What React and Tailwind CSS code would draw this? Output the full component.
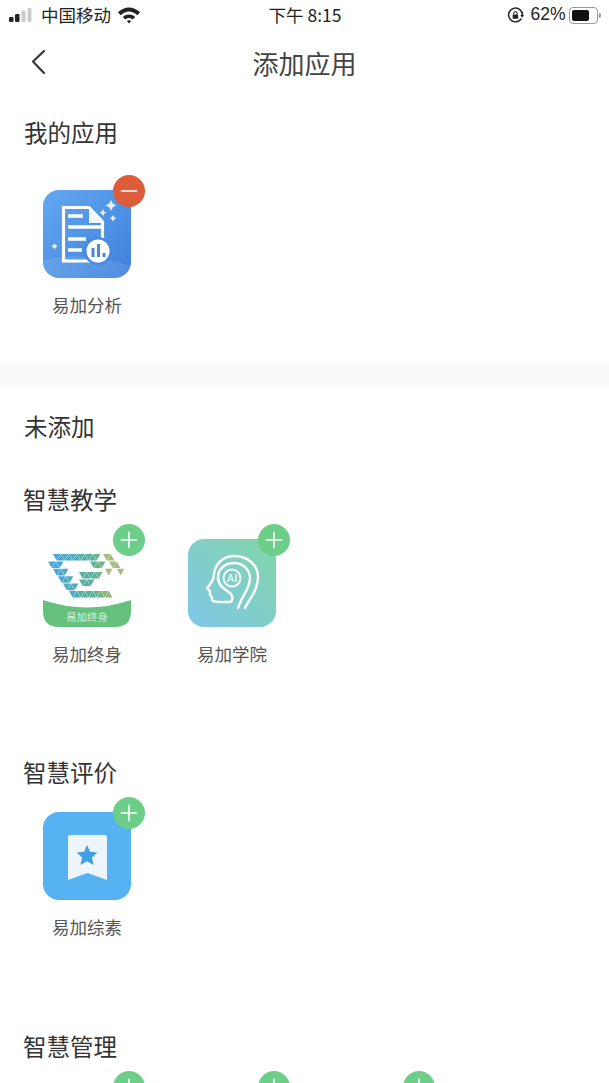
import React from "react";
import { Plus, Minus } from "lucide-react";

const CJK = "font-['Noto_Sans_CJK_SC','Noto_Sans',sans-serif]";

// triangle rows for the E logo: [startX, endX] in icon coords
const LOGO_ROWS = [
  { y: 15, spans: [[10, 58], [60, 72]] },
  { y: 22.4, spans: [[5, 23], [47, 63], [66, 80]] },
  { y: 29.8, spans: [[10, 28], [62, 70], [74, 84]] },
  { y: 33, spans: [[36, 60]] },
  { y: 37.2, spans: [[15, 31]] },
  { y: 40.4, spans: [[36, 52]] },
  { y: 44.6, spans: [[20, 36]] },
  { y: 52, spans: [[26, 72]] },
];

const logoColor = (x, y) => {
  if (x >= 60 && y < 32) return "#a7bb80";
  if (x > 56 && y > 45) return "#93b67c";
  if (x < 18) return "#4aa6d6";
  if (x < 34) return "#4fabc0";
  if (x < 50) return "#58b0a0";
  return "#6ab48a";
};

const ELogo = () => {
  const tris = [];
  LOGO_ROWS.forEach((row) => {
    row.spans.forEach(([a, b]) => {
      let i = 0;
      for (let x = a; x + 8 <= b + 0.1; x += 4) {
        const up = i % 2 === 1;
        const pts = up
          ? `${x},${row.y + 6.6} ${x + 3.7},${row.y} ${x + 7.4},${row.y + 6.6}`
          : `${x},${row.y} ${x + 7.4},${row.y} ${x + 3.7},${row.y + 6.6}`;
        tris.push(<polygon key={`${row.y}-${x}`} points={pts} fill={logoColor(x, row.y)} />);
        i++;
      }
    });
  });
  return <g>{tris}</g>;
};

const AnalysisIcon = () => (
  <div className="h-[88px] w-[88px] rounded-[16px] bg-gradient-to-br from-[#62a9f0] to-[#3f7fdc]">
    <svg viewBox="0 0 88 88" className="h-full w-full">
      <path d="M0 70 Q40 60 88 76 V72 Q88 88 72 88 H16 Q0 88 0 72Z" fill="#fff" opacity="0.1" />
      <path d="M20.5 17.5 H46 L59.5 32 V71 H20.5Z" fill="none" stroke="#fff" strokeWidth="3.2" />
      <path d="M46 17 V33 H60Z" fill="#fff" opacity="0.9" />
      <path d="M25 26 H40 M25 37 H58 M25 49 H43 M25 60 H39" stroke="#fff" strokeWidth="3.6" fill="none" />
      <circle cx="55" cy="61" r="14" fill="#4a87e0" />
      <circle cx="55" cy="61" r="11.5" fill="#fff" />
      <path d="M50 58 V67 M55.5 54 V67 M61 63 V67" stroke="#4a87e0" strokeWidth="3" />
      <path d="M68 10 l1.8 3.6 3.6 1.8 -3.6 1.8 -1.8 3.6 -1.8 -3.6 -3.6 -1.8 3.6 -1.8Z M60 19 l1.2 2.4 2.4 1.2 -2.4 1.2 -1.2 2.4 -1.2 -2.4 -2.4 -1.2 2.4 -1.2Z M70 25 l1.2 2 2 1.2 -2 1.2 -1.2 2 -1.2 -2 -2 -1.2 2 -1.2Z M11.5 53 l1.2 2 2 1.2 -2 1.2 -1.2 2 -1.2 -2 -2 -1.2 2 -1.2Z" fill="#fff" opacity="0.85" />
    </svg>
  </div>
);

const LifelongIcon = () => (
  <div className="h-[88px] w-[88px] bg-white">
    <svg viewBox="0 0 88 88" className="h-full w-full">
      <ELogo />
      <path d="M0 61 Q44 76 88 61 V72 Q88 88 72 88 H16 Q0 88 0 72Z" fill="#64c27e" />
      <text x="44" y="82" textAnchor="middle" fontSize="10.5" fill="#d6f2de" fontFamily="'Noto Sans CJK SC',sans-serif">易加终身</text>
    </svg>
  </div>
);

const CollegeIcon = () => (
  <div className="h-[88px] w-[88px] rounded-[16px] bg-gradient-to-tr from-[#81c6e8] to-[#82d6a6]">
    <svg viewBox="0 0 88 88" className="h-full w-full" fill="none" stroke="#fff" strokeWidth="2.4" strokeLinejoin="round" strokeLinecap="round">
      <path d="M57 69 C61 60 70 52 70 38 C70 26 60 17 46 17 C35 17 27 25 26 35 C26 40 24 43 19 49 L22 52 L22 56 L24 58 L24 61 C26 64 36 63 41 63 C45 63 45 58 43 55 C37 50 30 47 30 38 C30 30 37 24 46 24 C55 24 62 31 62 39 C62 50 54 56 50 69" />
      <circle cx="44" cy="39" r="8.5" strokeWidth="1.8" />
      <text x="44" y="43" textAnchor="middle" fontSize="11.5" fill="#fff" stroke="none" fontFamily="Roboto,sans-serif">AI</text>
    </svg>
  </div>
);

const ReviewIcon = () => (
  <div className="h-[88px] w-[88px] rounded-[16px] bg-[#57b2f4]">
    <svg viewBox="0 0 88 88" className="h-full w-full">
      <path d="M25 25 Q25 23 27 23 H62 Q64 23 64 25 V68 L44.5 61 L25 68Z" fill="#eef6fb" />
      <path d="M44 33 L47 39.8 L54.4 40.6 L49 45.6 L50.5 53 L44 49.3 L37.5 53 L39 45.6 L33.6 40.6 L41 39.8Z" fill="#3fa0e6" />
    </svg>
  </div>
);

const AppTile = ({ name, children, remove }) => (
  <div className="relative flex w-[88px] flex-col items-center">
    <div
      className={`absolute -right-[14px] -top-[15px] z-10 flex h-[32px] w-[32px] items-center justify-center rounded-full ${
        remove ? "bg-[#dd5c3b]" : "bg-[#6dce8a]"
      }`}
    >
      {remove ? (
        <Minus size={26} strokeWidth={1.5} className="text-white" />
      ) : (
        <Plus size={26} strokeWidth={1.5} className="text-white" />
      )}
    </div>
    {children}
    {name && (
      <div className={`mt-[14px] whitespace-nowrap text-[17.5px] leading-[26px] text-[#555] ${CJK}`}>{name}</div>
    )}
  </div>
);

const SectionTitle = ({ children, className = "" }) => (
  <div className={`text-[23.5px] leading-[32px] text-[#333] ${CJK} ${className}`}>{children}</div>
);

const StatusBar = () => (
  <div className="grid h-[30px] grid-cols-3 items-center pl-[9px] pr-[8px] text-[#222]">
    <div className="flex items-center">
      <svg width="24" height="15" viewBox="0 0 24 15" className="mr-[8px] shrink-0">
        <rect x="0" y="9" width="4.5" height="5" rx="1.2" fill="#222" />
        <rect x="6" y="6" width="4.5" height="8" rx="1.2" fill="#222" />
        <rect x="12.5" y="2.5" width="4" height="11.5" rx="1" fill="#ccc" />
        <rect x="18.5" y="0" width="4" height="14" rx="1" fill="#ccc" />
      </svg>
      <span className={`whitespace-nowrap text-[17.5px] leading-none ${CJK}`}>中国移动</span>
      <svg width="24" height="18" viewBox="0 0 22 17" className="ml-[6px] shrink-0">
        <path d="M0.5 6 C7 0 15 0 21.5 6 L18.8 8.7 C13.5 4 8.5 4 3.2 8.7Z M5.2 10.3 C9 7.3 13 7.3 16.8 10.3 L14.5 12.7 C12 11 10 11 7.5 12.7Z M9 14.2 C10.3 13.3 11.7 13.3 13 14.2 L11 16.5Z" fill="#222" />
      </svg>
    </div>
    <div className={`flex items-center justify-center whitespace-nowrap text-[17.5px] leading-none ${CJK}`}>下午 8:15</div>
    <div className="flex items-center justify-end">
      <svg width="17" height="17" viewBox="0 0 16 16" className="mr-[6px] shrink-0">
        <path d="M13.5 11 A6.5 6.5 0 1 1 14.5 8" fill="none" stroke="#222" strokeWidth="1.4" />
        <path d="M12.5 7.5 H16 L14.3 10Z" fill="#222" />
        <rect x="5.3" y="7" width="5.2" height="4" rx="0.6" fill="#222" />
        <path d="M6.3 7 V6 a1.6 1.6 0 0 1 3.2 0 V7" fill="none" stroke="#222" strokeWidth="1" />
      </svg>
      <span className="whitespace-nowrap font-['Liberation_Sans',sans-serif] text-[17.5px] leading-none">62%</span>
      <div className="ml-[4px] flex h-[17px] w-[29px] items-center rounded-[4px] border border-[#999] p-[2px]">
        <div className="h-full w-[17px] rounded-[2px] bg-[#111]" />
      </div>
      <div className="ml-[1px] h-[5px] w-[1.5px] rounded-r bg-[#999]" />
    </div>
  </div>
);

const App = () => {
  return (
    <div className="h-[1083px] w-[609px] overflow-hidden bg-white">
      <StatusBar />

      {/* Nav */}
      <div className="mt-[12px] grid h-[42px] grid-cols-3 items-center">
        <svg width="16" height="26" viewBox="0 0 16 26" className="-mt-[2px] ml-[30px]" fill="none" stroke="#333" strokeWidth="2.1" strokeLinecap="round" strokeLinejoin="round">
          <path d="M14 2 L3 12.5 L14 24" />
        </svg>
        <div className={`whitespace-nowrap text-center text-[26px] leading-[42px] text-[#444] ${CJK}`}>添加应用</div>
      </div>

      {/* My apps */}
      <div className="h-[280px] pt-[32px]">
        <SectionTitle className="pl-[24px]">我的应用</SectionTitle>
        <div className="mt-[42px] flex gap-[57px] pl-[43px]">
          <AppTile name="易加分析" remove>
            <AnalysisIcon />
          </AppTile>
        </div>
      </div>

      <div className="h-[23px] bg-[#f7f9fb]" />

      <SectionTitle className="mt-[23px] pl-[24px]">未添加</SectionTitle>

      <SectionTitle className="mt-[41px] pl-[23px]">智慧教学</SectionTitle>
      <div className="mt-[24px] flex h-[217px] gap-[57px] pl-[43px]">
        <AppTile name="易加终身">
          <LifelongIcon />
        </AppTile>
        <AppTile name="易加学院">
          <CollegeIcon />
        </AppTile>
      </div>

      <SectionTitle className="pl-[23px]">智慧评价</SectionTitle>
      <div className="mt-[24px] flex h-[218px] gap-[57px] pl-[43px]">
        <AppTile name="易加综素">
          <ReviewIcon />
        </AppTile>
      </div>

      <SectionTitle className="pl-[23px]">智慧管理</SectionTitle>
      <div className="mt-[24px] flex gap-[57px] pl-[43px]">
        <AppTile>
          <div className="h-[88px] w-[88px]" />
        </AppTile>
        <AppTile>
          <div className="h-[88px] w-[88px]" />
        </AppTile>
        <AppTile>
          <div className="h-[88px] w-[88px]" />
        </AppTile>
      </div>
    </div>
  );
};

export default App;
